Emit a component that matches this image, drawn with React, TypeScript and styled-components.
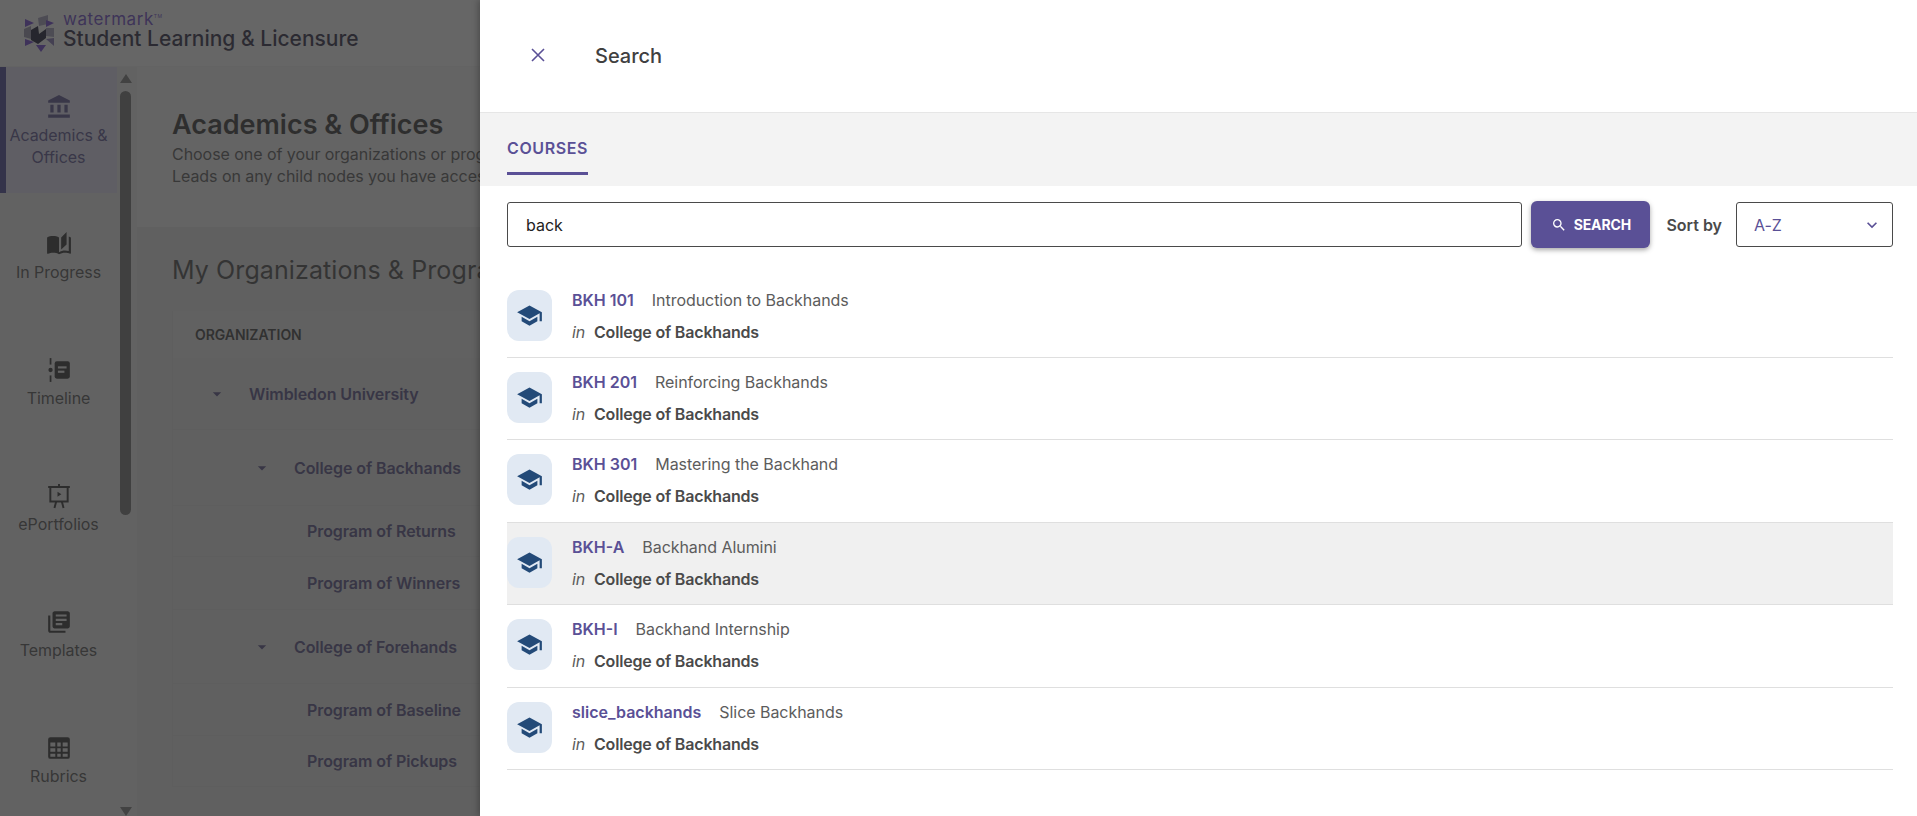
import styled, { createGlobalStyle } from "styled-components";
import {
  MdAccountBalance,
  MdArrowDropDown,
  MdAutoStories,
  MdKeyboardArrowDown,
  MdLibraryBooks,
  MdSchool,
  MdSearch,
} from "react-icons/md";
import type { ReactNode } from "react";

const PURPLE = "#5a5096";
const TEXT = "#4a4a4a";

const GlobalStyle = createGlobalStyle`
  html, body {
    margin: 0;
    height: 100%;
    overflow: hidden;
    font-family: "Inter", "Liberation Sans", sans-serif;
    letter-spacing: -0.05px;
    color: ${TEXT};
  }
  * {
    box-sizing: border-box;
  }
`;

const Page = styled.div`
  position: relative;
  width: 1917px;
  height: 816px;
  overflow: hidden;
  background: #fff;
  display: flex;
  flex-direction: column;
`;

const TopBar = styled.header`
  height: 67px;
  flex: none;
  padding-left: 23px;
  display: flex;
  align-items: center;
  gap: 8px;
  background: #fff;
  border-bottom: 1px solid #f2f2f2;
`;

const BrandText = styled.div`
  display: flex;
  flex-direction: column;
  margin-top: -4px;
`;

const Watermark = styled.div`
  font-size: 17px;
  line-height: 15px;
  letter-spacing: 0.55px;
  color: #5f38c8;
  sup {
    font-size: 5px;
    line-height: 0;
    vertical-align: 7px;
  }
`;

const Product = styled.div`
  font-size: 21px;
  line-height: 24px;
  font-weight: 500;
  letter-spacing: 0;
  color: #141030;
`;

const Body = styled.div`
  flex: 1;
  min-height: 0;
  display: flex;
`;

const Sidebar = styled.nav`
  width: 136px;
  flex: none;
  display: flex;
  background: #f0f0f0;
`;

const NavList = styled.div`
  width: 117px;
  flex: none;
`;

const NavItem = styled.div<{ $active?: boolean }>`
  height: 126px;
  padding-right: 6px;
  display: flex;
  flex-direction: column;
  align-items: center;
  justify-content: center;
  border-left: 6px solid ${(p) => (p.$active ? "#3a3490" : "transparent")};
  background: ${(p) => (p.$active ? "#e3e0f5" : "transparent")};
  color: ${(p) => (p.$active ? "#4c4488" : "#444")};
  svg {
    width: 26px;
    height: 26px;
    margin: 1px 0;
    color: ${(p) => (p.$active ? "#4c4488" : "#1c1c1c")};
  }
`;

const NavLabel = styled.span`
  font-size: 16px;
  line-height: 22px;
  text-align: center;
  margin-top: 3px;
`;

const ScrollTrack = styled.div`
  width: 19px;
  flex: none;
  display: flex;
  flex-direction: column;
  align-items: center;
  padding: 7px 6px 0 4px;
  height: 749px;
`;

const ArrowUp = styled.div`
  width: 0;
  height: 0;
  flex: none;
  border-left: 6.5px solid transparent;
  border-right: 6.5px solid transparent;
  border-bottom: 9px solid #707070;
`;

const ArrowDown = styled(ArrowUp)`
  transform: rotate(180deg);
  margin-top: auto;
`;

const Thumb = styled.div`
  width: 11px;
  height: 424px;
  margin-top: 8px;
  border-radius: 6px;
  background: #686868;
`;

const Main = styled.main`
  flex: 1;
  min-width: 0;
  display: flex;
  flex-direction: column;
  background: #e6e6e6;
  border-left: 1px solid #efefef;
`;

const Intro = styled.section`
  height: 160px;
  flex: none;
  padding: 44px 0 0 35px;
  background: #f6f6f6;
`;

const Heading = styled.h1`
  margin: 0;
  font-size: 27px;
  line-height: 28px;
  font-weight: 600;
  letter-spacing: 0;
  color: #222;
`;

const IntroLine = styled.p`
  margin: 0;
  font-size: 16px;
  line-height: 22px;
  white-space: nowrap;
  color: #4a4a4a;
  &:first-of-type {
    margin-top: 4px;
  }
`;

const Orgs = styled.section`
  padding: 29px 0 0 35px;
`;

const OrgTitle = styled.h2`
  margin: 0 0 27px;
  font-size: 25px;
  line-height: 28px;
  font-weight: 400;
  letter-spacing: 0.1px;
  white-space: nowrap;
  color: #3a3a3a;
`;

const OrgTable = styled.div`
  border-left: 1px solid #e0e0e0;
`;

const OrgHeader = styled.div`
  height: 47px;
  padding-left: 22px;
  display: flex;
  align-items: center;
  font-size: 14px;
  font-weight: 600;
  background: #ececec;
  color: #2c2c2c;
`;

const OrgRow = styled.div<{ $height: number; $indent: number }>`
  height: ${(p) => p.$height}px;
  padding-left: ${(p) => p.$indent}px;
  display: flex;
  align-items: center;
  font-size: 16px;
  font-weight: 600;
  letter-spacing: -0.08px;
  white-space: nowrap;
  color: #48407e;
  border-bottom: 1px solid #e0e0e0;
  svg {
    width: 20px;
    height: 20px;
    margin-right: 22px;
  }
`;

const Backdrop = styled.div`
  position: absolute;
  inset: 0;
  background: rgba(51, 51, 51, 0.75);
`;

const Drawer = styled.aside`
  position: absolute;
  top: 0;
  right: 0;
  bottom: 0;
  width: 1437px;
  display: flex;
  flex-direction: column;
  background: #fff;
  box-shadow: -2px 0 6px rgba(0, 0, 0, 0.25);
`;

const DrawerHeader = styled.div`
  height: 113px;
  flex: none;
  padding-left: 48px;
  display: flex;
  align-items: center;
  border-bottom: 1px solid #e6e6e6;
`;

const CloseGlyph = styled.svg`
  width: 20px;
  height: 20px;
  flex: none;
  margin-top: -3px;
  fill: none;
  stroke: ${PURPLE};
  stroke-width: 1.6;
`;

const DrawerTitle = styled.h2`
  margin: 0 0 0 47px;
  font-size: 20px;
  line-height: 24px;
  font-weight: 500;
  letter-spacing: 0;
  color: #404040;
`;

const TabBar = styled.div`
  height: 73px;
  flex: none;
  padding: 0 27px;
  display: flex;
  align-items: flex-start;
  background: #f3f3f3;
`;

const Tab = styled.div`
  height: 62px;
  padding-top: 24px;
  font-size: 16px;
  line-height: 22px;
  font-weight: 600;
  letter-spacing: 0.6px;
  color: ${PURPLE};
  border-bottom: 3px solid ${PURPLE};
`;

const SearchRow = styled.div`
  flex: none;
  padding: 15px 24px 0 27px;
  display: flex;
  align-items: center;
`;

const SearchInput = styled.input`
  flex: 1;
  min-width: 0;
  height: 45px;
  padding: 0 18px;
  font: 400 16px "Inter", sans-serif;
  color: #222;
  background: #fff;
  border: 1px solid #4a4a4a;
  border-radius: 3px;
  outline: none;
`;

const SearchButton = styled.button`
  width: 119px;
  height: 47px;
  flex: none;
  margin-left: 9px;
  display: flex;
  align-items: center;
  justify-content: center;
  gap: 7px;
  font: 700 14px "Inter", sans-serif;
  letter-spacing: -0.1px;
  color: #fff;
  background: ${PURPLE};
  border: none;
  border-radius: 6px;
  box-shadow: 0 2px 5px rgba(0, 0, 0, 0.35);
  svg {
    width: 16px;
    height: 16px;
  }
`;

const SortLabel = styled.label`
  margin: 0 14px 0 16px;
  font-size: 16px;
  font-weight: 600;
  letter-spacing: 0;
  white-space: nowrap;
  color: ${TEXT};
`;

const SortSelect = styled.div`
  width: 157px;
  height: 45px;
  flex: none;
  padding: 0 10px 0 17px;
  display: flex;
  align-items: center;
  justify-content: space-between;
  font-size: 16px;
  color: ${PURPLE};
  border: 1px solid #4a4a4a;
  border-radius: 3px;
  svg {
    width: 20px;
    height: 20px;
  }
`;

const ResultList = styled.ul`
  list-style: none;
  margin: 27.6px 24px 0 27px;
  padding: 0;
`;

const Result = styled.li<{ $hover?: boolean }>`
  height: 82.4px;
  padding-top: 14px;
  display: flex;
  gap: 20px;
  background: ${(p) => (p.$hover ? "#f0f0f0" : "transparent")};
  border-bottom: 1px solid #dfdfdf;
`;

const CourseIcon = styled.div`
  width: 45px;
  height: 51px;
  flex: none;
  display: flex;
  align-items: center;
  justify-content: center;
  background: #e1e9f3;
  border-radius: 12px;
  svg {
    width: 27px;
    height: 27px;
    color: #234a78;
  }
`;

const ResultText = styled.div`
  display: flex;
  flex-direction: column;
  gap: 10px;
  margin-top: -1px;
  font-size: 16px;
  line-height: 22px;
`;

const ResultTitle = styled.div`
  display: flex;
  gap: 18px;
`;

const CourseCode = styled.span`
  font-weight: 600;
  letter-spacing: 0;
  color: ${PURPLE};
`;

const CourseName = styled.span`
  color: #5c5c5c;
`;

const ResultParent = styled.div`
  display: flex;
  gap: 9px;
  font-weight: 600;
  letter-spacing: -0.18px;
  color: ${TEXT};
  em {
    font-weight: 400;
    color: #5c5c5c;
  }
`;

function LogoMark() {
  return (
    <svg width="32" height="37" viewBox="0 0 32 37" aria-hidden="true">
      <polygon points="15,3 25,0 25,9 16,11" fill="#9d98b8" />
      <polygon points="2,4 11,8 2,12" fill="#6030d0" />
      <polygon points="23,5 31,8 23,12" fill="#6030d0" />
      <polygon points="1,14 8,11 8,24 1,22" fill="#8f8ba8" />
      <polygon points="23,13 31,13 31,22 23,21" fill="#9d98b8" />
      <polygon points="2,24 11,27 2,31" fill="#6030d0" />
      <polygon points="23,24 31,23 31,31" fill="#7a68b0" />
      <polygon points="13,30 23,30 18,37" fill="#6030d0" />
      <polygon points="8,15 15,11 16,19 23,14 23,23 15,29 8,25" fill="#000020" />
    </svg>
  );
}

function TimelineIcon() {
  return (
    <svg viewBox="0 0 24 24" fill="currentColor" aria-hidden="true">
      <rect x="3.4" y="1" width="1.6" height="6" />
      <rect x="3.4" y="17" width="1.6" height="6" />
      <circle cx="4.2" cy="12" r="2" />
      <path d="M10 4h10a2 2 0 0 1 2 2v12a2 2 0 0 1-2 2H10a2 2 0 0 1-2-2V6a2 2 0 0 1 2-2z" />
      <rect x="11" y="8.6" width="8" height="2" fill="#f0f0f0" />
      <rect x="11" y="12.6" width="6" height="2" fill="#f0f0f0" />
    </svg>
  );
}

function EaselIcon() {
  return (
    <svg viewBox="0 0 24 24" fill="none" stroke="currentColor" strokeWidth="1.8" aria-hidden="true">
      <path d="M2 3.6h20M4 3.6v13.4h16V3.6" />
      <path d="M12 1v2.6" />
      <path d="M9.4 17l-1.6 6M14.6 17l1.6 6" />
      <path d="M10.6 8l3.6 2.4-3.6 2.4z" fill="currentColor" stroke="none" />
    </svg>
  );
}

function GridIcon() {
  return (
    <svg viewBox="0 0 24 24" fill="currentColor" aria-hidden="true">
      <path
        fillRule="evenodd"
        d="M4 2h16a2 2 0 0 1 2 2v16a2 2 0 0 1-2 2H4a2 2 0 0 1-2-2V4a2 2 0 0 1 2-2zm0 5v3.5h4.6V7zm6.4 0v3.5h3.2V7zm5 0v3.5H20V7zM4 12.2v3.3h4.6v-3.3zm6.4 0v3.3h3.2v-3.3zm5 0v3.3H20v-3.3zM4 17.2V20h4.6v-2.8zm6.4 0V20h3.2v-2.8zm5 0V20H20v-2.8z"
      />
    </svg>
  );
}

const NAV: { label: ReactNode; icon: ReactNode; active?: boolean }[] = [
  {
    label: (
      <>
        Academics &amp;
        <br />
        Offices
      </>
    ),
    icon: <MdAccountBalance />,
    active: true,
  },
  { label: "In Progress", icon: <MdAutoStories /> },
  { label: "Timeline", icon: <TimelineIcon /> },
  { label: "ePortfolios", icon: <EaselIcon /> },
  { label: "Templates", icon: <MdLibraryBooks /> },
  { label: "Rubrics", icon: <GridIcon /> },
];

const ORGS = [
  { name: "Wimbledon University", height: 72, indent: 34, caret: true },
  { name: "College of Backhands", height: 76, indent: 79, caret: true },
  { name: "Program of Returns", height: 51, indent: 134, caret: false },
  { name: "Program of Winners", height: 53, indent: 134, caret: false },
  { name: "College of Forehands", height: 74, indent: 79, caret: true },
  { name: "Program of Baseline", height: 52, indent: 134, caret: false },
  { name: "Program of Pickups", height: 51, indent: 134, caret: false },
];

const COURSES = [
  { code: "BKH 101", name: "Introduction to Backhands" },
  { code: "BKH 201", name: "Reinforcing Backhands" },
  { code: "BKH 301", name: "Mastering the Backhand" },
  { code: "BKH-A", name: "Backhand Alumini", hover: true },
  { code: "BKH-I", name: "Backhand Internship" },
  { code: "slice_backhands", name: "Slice Backhands" },
];

export default function App() {
  return (
    <Page>
      <GlobalStyle />
      <TopBar>
        <LogoMark />
        <BrandText>
          <Watermark>
            watermark<sup>TM</sup>
          </Watermark>
          <Product>Student Learning &amp; Licensure</Product>
        </BrandText>
      </TopBar>

      <Body>
        <Sidebar>
          <NavList>
            {NAV.map((item, i) => (
              <NavItem key={i} $active={item.active}>
                {item.icon}
                <NavLabel>{item.label}</NavLabel>
              </NavItem>
            ))}
          </NavList>
          <ScrollTrack>
            <ArrowUp />
            <Thumb />
            <ArrowDown />
          </ScrollTrack>
        </Sidebar>

        <Main>
          <Intro>
            <Heading>Academics &amp; Offices</Heading>
            <IntroLine>Choose one of your organizations or programs</IntroLine>
            <IntroLine>Leads on any child nodes you have access</IntroLine>
          </Intro>
          <Orgs>
            <OrgTitle>My Organizations &amp; Programs</OrgTitle>
            <OrgTable>
              <OrgHeader>ORGANIZATION</OrgHeader>
              {ORGS.map((org) => (
                <OrgRow key={org.name} $height={org.height} $indent={org.indent}>
                  {org.caret && <MdArrowDropDown />}
                  {org.name}
                </OrgRow>
              ))}
            </OrgTable>
          </Orgs>
        </Main>
      </Body>

      <Backdrop />

      <Drawer>
        <DrawerHeader>
          <CloseGlyph viewBox="0 0 20 20" aria-hidden="true">
            <path d="M4 4l12 12M16 4L4 16" />
          </CloseGlyph>
          <DrawerTitle>Search</DrawerTitle>
        </DrawerHeader>
        <TabBar>
          <Tab>COURSES</Tab>
        </TabBar>
        <SearchRow>
          <SearchInput value="back" readOnly />
          <SearchButton>
            <MdSearch />
            SEARCH
          </SearchButton>
          <SortLabel>Sort by</SortLabel>
          <SortSelect>
            A-Z
            <MdKeyboardArrowDown />
          </SortSelect>
        </SearchRow>
        <ResultList>
          {COURSES.map((course) => (
            <Result key={course.code} $hover={course.hover}>
              <CourseIcon>
                <MdSchool />
              </CourseIcon>
              <ResultText>
                <ResultTitle>
                  <CourseCode>{course.code}</CourseCode>
                  <CourseName>{course.name}</CourseName>
                </ResultTitle>
                <ResultParent>
                  <em>in</em>
                  College of Backhands
                </ResultParent>
              </ResultText>
            </Result>
          ))}
        </ResultList>
      </Drawer>
    </Page>
  );
}
